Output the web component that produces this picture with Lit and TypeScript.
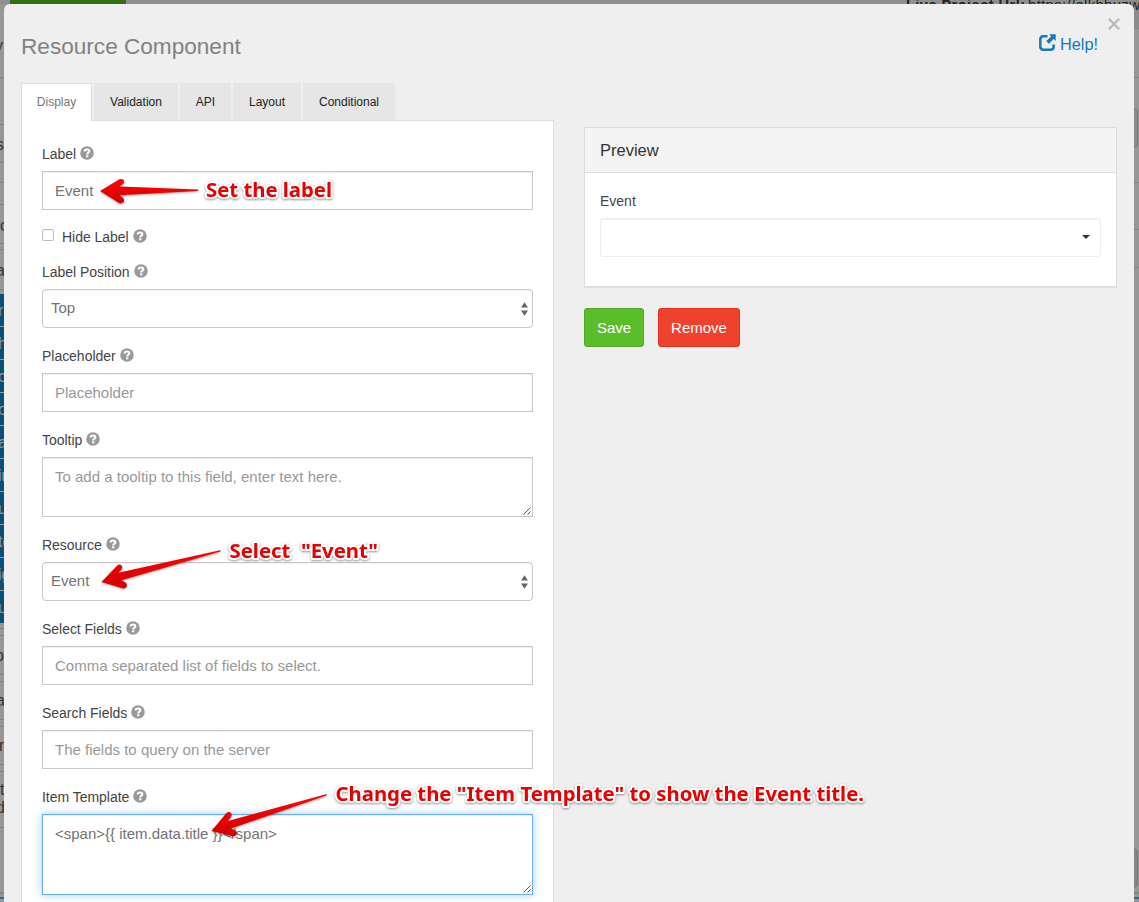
import { LitElement, html, css, svg, nothing } from "lit";
import { customElement, property } from "lit/decorators.js";

@customElement("help-icon")
class HelpIcon extends LitElement {
  static styles = css`
    :host { display: inline-block; width: 14px; height: 14px; flex: none; }
    svg { display: block; }
  `;
  render() {
    return html`<svg width="14" height="14" viewBox="0 0 13 13">
      <circle cx="6.5" cy="6.5" r="6.3" fill="#999" />
      <path d="M4.3 5.1C4.3 3.700 5.300 3.200 6.500 3.200C7.800 3.200 8.700 3.900 8.700 4.900C8.700 6.200 6.700 6.200 6.700 7.800" fill="none" stroke="#fff" stroke-width="1.900" />
      <rect x="5.700" y="8.600" width="2" height="1.900" fill="#fff" />
    </svg>`;
  }
}

@customElement("form-field")
class FormField extends LitElement {
  @property() label = "";
  @property() kind = "input";
  @property() value = "";
  @property() hint = "";
  static styles = css`
    :host { display: block; margin-bottom: 19px; }
    .label { display: flex; align-items: center; gap: 4px; height: 18px; line-height: 19px; margin-bottom: 8px; font-size: 14px; letter-spacing: -.03px; color: #444; }
    help-icon { margin-top: -2px; }
    .box { box-sizing: border-box; border: 1px solid #c8c8c8; background: #fff; box-shadow: inset 0 1px 1px rgba(0,0,0,.075); display: flex; justify-content: space-between; height: 39px; padding: 0 12px; line-height: 38px; font-size: 15px; color: #737373; }
    .box .hint { color: #999; }
    .select { border-radius: 4px; padding: 0 4px 0 8px; line-height: 35px; align-items: center; box-shadow: inset 0 1px 1px rgba(0,0,0,.05); }
    .select .text { height: 37px; }
    .area, .focus { line-height: 20px; padding: 9px 0 0 12px; height: 60px; align-items: flex-start; }
    .focus { height: 81px; border-color: #66afe9; box-shadow: inset 0 1px 1px rgba(0,0,0,.075), 0 0 8px rgba(102,175,233,.6); }
    .grip { align-self: flex-end; margin: 0 1px 1px 0; flex: none; }
    .text { white-space: nowrap; }
  `;
  render() {
    const area = this.kind === "area" || this.kind === "focus";
    return html`
      <div class="label"><span>${this.label}</span><help-icon></help-icon></div>
      <div class="box ${this.kind}">
        <span class="text ${this.value ? "" : "hint"}">${this.value || this.hint}</span>
        ${this.kind === "select"
          ? html`<svg width="7" height="14" viewBox="0 0 7 14"><path d="M3.500 .2L7 5.600H0ZM3.500 13.800L7 8.400H0Z" fill="#666" /></svg>`
          : nothing}
        ${area
          ? html`<svg class="grip" width="8" height="8" viewBox="0 0 8 8"><path d="M.5 7.500L7.500 .5M4.500 7.500L7.500 4.500" stroke="#555" stroke-width="1" /></svg>`
          : nothing}
      </div>`;
  }
}

const marks = [
  { text: "y", y: 50, x: -5 }, { text: "s", y: 149, x: -4 }, { text: "c", y: 230, x: 0 },
  { text: "a", y: 275, x: -4 }, { text: "p", y: 660, x: -5 }, { text: "a", y: 705, x: -4 },
  { text: "m", y: 750, x: -1 }, { text: "t", y: 794, x: 0 }, { text: "d", y: 812, x: -4 },
];
const blueMarks = ["r", "h", "c", "o.", "a", "in", "u", "te", "ig", "u"];
const leftLines = [77, 124, 162, 182, 204, 243, 249, 289, 628, 635, 674, 681, 719, 726, 764, 771, 827];
const rightLines = [28, 77, 182, 229, 267];

@customElement("app-root")
class AppRoot extends LitElement {
  static styles = css`
    :host { display: block; position: relative; width: 1139px; height: 902px; overflow: hidden; background: #969696; font-family: "Liberation Sans", Arial, sans-serif; }
    .backdrop, .notes { position: absolute; left: 0; top: 0; display: block; }
    .dialog { position: relative; box-sizing: border-box; margin: 4px 5px 0 4px; height: 898px; background: #efefef; border-radius: 6px 6px 0 0; padding: 0 17px; }
    .close { position: absolute; right: 14px; top: 14px; }
    header { display: flex; justify-content: space-between; height: 79px; box-sizing: border-box; padding-top: 29px; }
    h1 { margin: 0; font-size: 22.6px; font-weight: 400; line-height: 28px; color: #828282; }
    .help { display: flex; gap: 4px; height: 22px; align-items: center; font-size: 16.3px; color: #1479bd; margin-right: 19px; text-decoration: none; }
    .help svg { margin-top: -4px; }
    .columns { display: flex; align-items: flex-start; gap: 30px; }
    .left { width: 533px; }
    .tabs { display: flex; gap: 2px; height: 38px; margin-bottom: -1px; position: relative; }
    .tab { box-sizing: border-box; height: 37px; line-height: 38px; background: #e6e6e6; font-size: 12px; color: #222; text-align: center; }
    .tab.active { width: 71px; height: 38px; background: #fff; border: 1px solid #ddd; border-bottom: 0; color: #777; line-height: 37px; }
    .validation { width: 84px; } .api { width: 51px; } .layout { width: 68px; } .conditional { width: 92px; }
    .panel { box-sizing: border-box; border: 1px solid #ddd; background: #fff; height: 800px; padding: 24px 20px 0; }
    .first { margin-bottom: 18px; }
    .check { display: flex; align-items: center; height: 18px; margin-bottom: 17px; font-size: 14px; letter-spacing: -.03px; color: #444; gap: 4px; }
    .tick { box-sizing: border-box; width: 12px; height: 12px; border: 1px solid #bbb; border-radius: 2px; margin: -4px 4px 0 0; }
    .check help-icon { margin-top: -2px; }
    .right { width: 533px; padding-top: 44px; }
    .preview { box-sizing: border-box; height: 160px; border: 1px solid #ddd; background: #fff; box-shadow: 0 1px 1px rgba(0,0,0,.05); }
    .preview-head { height: 44px; line-height: 45px; padding: 0 15px; background: #f4f4f4; border-bottom: 1px solid #ddd; font-size: 16.5px; color: #333; }
    .preview-body { padding: 19px 15px; }
    .preview-label { font-size: 14px; line-height: 19px; height: 18px; color: #444; margin-bottom: 8px; }
    .dropdown { box-sizing: border-box; display: flex; justify-content: flex-end; align-items: center; height: 39px; padding: 0 10px 2px 0; border: 1px solid #eee; border-radius: 3px; box-shadow: inset 0 1px 1px rgba(0,0,0,.06); }
    .buttons { display: flex; gap: 14px; margin-top: 21px; }
    .button { box-sizing: border-box; height: 39px; line-height: 38px; border-radius: 3px; border: 1px solid; font-size: 15px; color: #fff; text-align: center; }
    .save { width: 60px; background: #5bbd2c; border-color: #51a826; }
    .remove { width: 82px; background: #ee422f; border-color: #e2321f; }
    .note { font-family: "Noto Sans", "Open Sans", sans-serif; font-weight: 700; font-size: 20px; fill: #e60000; stroke: #fff; stroke-width: 4px; stroke-linejoin: round; paint-order: stroke; filter: drop-shadow(0 1px 1px rgba(0,0,0,.4)); white-space: pre; }
    .arrow { fill: url(#red); filter: drop-shadow(0 1px 1px rgba(0,0,0,.35)); }
  `;

  backdrop() {
    return html`<svg class="backdrop" width="1139" height="902" viewBox="0 0 1139 902" font-size="16">
      <rect width="1139" height="4" fill="#8f8f8f" />
      <rect width="1139" height="902" x="0" y="4" fill="#979797" />
      <rect x="10" width="116" height="5" fill="#336e16" />
      <rect x="1129" width="10" height="28" fill="#8c8c8c" />
      ${leftLines.map((y) => svg`<rect y=${y} width="5" height="1" fill="#838383" />`)}
      ${rightLines.map((y) => svg`<rect x="1132" y=${y} width="7" height="1" fill="#858585" />`)}
      ${marks.map((m) => svg`<text x=${m.x} y=${m.y + 1} fill="#333">${m.text}</text>`)}
      ${blueMarks.map((t, i) => svg`
        <rect y=${294 + i * 33} width="5" height="32" fill="#0c4f76" />
        <rect y=${326 + i * 33} width="5" height="1" fill="#999" />
        <text x="-2" y=${316 + i * 33} fill="#8d9ba4">${t}</text>`)}
      <rect y="892" width="1139" height="2" fill="#73936a" />
      <rect y="897" width="1139" height="2" fill="#246c92" />
      <rect x="1125" y="109" width="12.5" height="38" rx="3" fill="#8c8c8c" stroke="#777" />
      <rect x="1125" y="849" width="12.5" height="38" rx="3" fill="#858585" stroke="#777" />
      <text x="906" y="10" font-size="14.5" font-weight="700" fill="#222" textLength="119">Live Project Url:</text>
      <text x="1028" y="10" font-size="15" fill="#222" textLength="112">https://elkhbuzw</text>
    </svg>`;
  }

  notes() {
    return html`<svg class="notes" width="1139" height="902" viewBox="0 0 1139 902">
      <defs><linearGradient id="red" x1="0" y1="0" x2="0" y2="1"><stop offset="0" stop-color="#ff0505" /><stop offset="1" stop-color="#d20000" /></linearGradient></defs>
      <path class="arrow" d="M100 191L119.500 179.300Q122 178.300 123.500 180Q125 182.500 122.500 184.500L119.500 186.500L197.500 189.400Q199 190.200 197.500 191L119.500 195.300L123 197.800Q125 200 123.500 202Q121.500 204.300 119 203Z" />
      <path class="arrow" d="M101.500 582L117.500 565.300Q119.500 563.700 121.500 565.500Q123 567.300 121.500 569.500L118.500 572.700L220 550.300Q221.500 551 220.500 551.600L121.500 580.200L125.500 582.600Q127.500 584.500 126.500 586.700Q125.500 588.800 122.500 588.300Z" />
      <path class="arrow" d="M211.500 831L226.500 813Q229 811 231 813Q232.300 814.800 231 817L228 821L326 794.200Q327.500 794.700 326.500 795.500L231 828.500L235.500 830.500Q237.500 832.500 236.500 834.500Q235 836.700 232 836Z" />
      <text class="note" x="206" y="197" textLength="126" lengthAdjust="spacingAndGlyphs">Set the label</text>
      <text class="note" x="229.500" y="558" textLength="148.500" lengthAdjust="spacingAndGlyphs" xml:space="preserve">Select  "Event"</text>
      <text class="note" x="335.500" y="801" textLength="528.500" lengthAdjust="spacingAndGlyphs">Change the "Item Template" to show the Event title.</text>
    </svg>`;
  }

  render() {
    return html`
      ${this.backdrop()}
      <div class="dialog">
        <svg class="close" width="12" height="12" viewBox="0 0 12 12"><path d="M.8 .8L11.200 11.200M11.200 .8L.8 11.200" stroke="#b8b8b8" stroke-width="2.200" /></svg>
        <header>
          <h1>Resource Component</h1>
          <a class="help"><svg width="17" height="17" viewBox="0 0 17 17">
            <path d="M8.500 2.300H4.500Q1.300 2.300 1.300 5.500V12.500Q1.300 15.700 4.500 15.700H11.500Q14.700 15.700 14.700 12.500V10.500" fill="none" stroke="#1479bd" stroke-width="2.500" />
            <path d="M10.200 .3H16.700V7L14.600 4.900L9.900 9.800L7.200 7.100L12.100 2.400Z" fill="#1479bd" />
          </svg><span>Help!</span></a>
        </header>
        <div class="columns">
          <div class="left">
            <nav class="tabs">
              <div class="tab active">Display</div>
              <div class="tab validation">Validation</div>
              <div class="tab api">API</div>
              <div class="tab layout">Layout</div>
              <div class="tab conditional">Conditional</div>
            </nav>
            <div class="panel">
              <form-field class="first" label="Label" value="Event"></form-field>
              <div class="check"><span class="tick"></span><span>Hide Label</span><help-icon></help-icon></div>
              <form-field label="Label Position" kind="select" value="Top"></form-field>
              <form-field label="Placeholder" hint="Placeholder"></form-field>
              <form-field label="Tooltip" kind="area" hint="To add a tooltip to this field, enter text here."></form-field>
              <form-field label="Resource" kind="select" value="Event"></form-field>
              <form-field label="Select Fields" hint="Comma separated list of fields to select."></form-field>
              <form-field label="Search Fields" hint="The fields to query on the server"></form-field>
              <form-field label="Item Template" kind="focus" value="<span>{{ item.data.title }}</span>"></form-field>
            </div>
          </div>
          <div class="right">
            <section class="preview">
              <div class="preview-head">Preview</div>
              <div class="preview-body">
                <div class="preview-label">Event</div>
                <div class="dropdown"><svg width="8" height="4" viewBox="0 0 8 4"><path d="M0 0H8L4 4Z" fill="#333" /></svg></div>
              </div>
            </section>
            <div class="buttons"><div class="button save">Save</div><div class="button remove">Remove</div></div>
          </div>
        </div>
      </div>
      ${this.notes()}`;
  }
}
